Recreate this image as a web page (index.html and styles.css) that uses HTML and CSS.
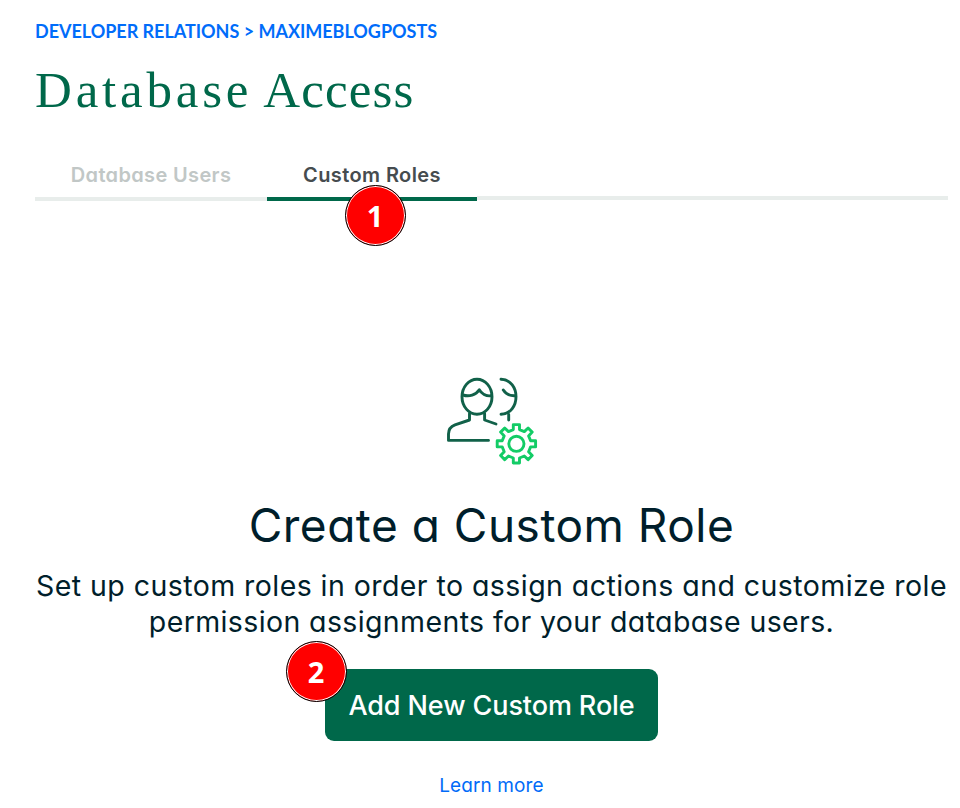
FILE: index.html
```html
<!DOCTYPE html>
<html lang="en">
<head>
<meta charset="utf-8">
<title>Database Access</title>
<link rel="stylesheet" href="styles.css">
</head>
<body>
<main class="page">
  <nav class="breadcrumb">DEVELOPER RELATIONS &gt; MAXIMEBLOGPOSTS</nav>
  <h1 class="title"><span class="wide">Database</span> Access</h1>
  <div class="tabs">
    <a class="tab tab-users"><span>Database Users</span></a>
    <a class="tab tab-roles"><span>Custom Roles</span><b class="marker marker-one">1</b></a>
    <div class="rule"></div>
  </div>
  <section class="empty">
    <svg class="icon" width="110" height="100" viewBox="0 0 110 100" fill="none" stroke-width="2.9" stroke-linecap="round" stroke-linejoin="round">
      <g stroke="#116149">
        <ellipse cx="41" cy="26.8" rx="15" ry="17.5"/>
        <path d="M27 25C33 27 40 25 43.3 19.8C45.5 23.5 50 26.5 55 25.8"/>
        <path d="M33.5 43.5V50L19 54.8C14.5 56.5 12.5 60 12.5 64V70.4H52.5M48.6 43.5V50L60 54"/>
        <path d="M65 9.3C85 10 85 43.5 65 44.3M67.3 20C69.5 23.5 73.5 25.8 78.5 25.7M72.7 44.5V50"/>
      </g>
      <g stroke="#13cc66" transform="translate(80.4 73.8)">
        <circle r="7.6"/>
        <path d="M-3.1-19.2H3.1V-14.2L7.9-12.2 11.7-15.8 15.8-11.7 12.2-7.9 14.2-3.1H19.2V3.1H14.2L12.2 7.9 15.8 11.7 11.7 15.8 7.9 12.2 3.1 14.2V19.2H-3.1V14.2L-7.9 12.2-11.7 15.8-15.8 11.7-12.2 7.9-14.2 3.1H-19.2V-3.1H-14.2L-12.2-7.9-15.8-11.7-11.7-15.8-7.9-12.2-3.1-14.2Z"/>
      </g>
    </svg>
    <h2 class="heading">Create a Custom Role</h2>
    <p class="copy"><span class="line-one">Set up custom roles in order to assign actions and customize role</span><br><span class="line-two">permission assignments for your database users.</span></p>
    <button class="add"><span>Add New Custom Role</span><b class="marker marker-two">2</b></button>
    <a class="learn">Learn more</a>
  </section>
</main>
</body>
</html>
```
FILE: styles.css
```css
* { box-sizing: border-box; }
body { margin: 0; background: #fff; font-family: Inter, sans-serif; font-feature-settings: "cv11" 1; }
.page { width: 960px; height: 808px; padding: 19px 12px 0 35px; overflow: hidden; white-space: nowrap; }
.breadcrumb { height: 25px; line-height: 25px; color: #006cfa; font-family: Lato, sans-serif; font-size: 18px; font-weight: 700; letter-spacing: -.02px; }
.title { margin: 16px 0 0; height: 60px; color: #00684a; font: 400 51px/60px "Liberation Serif", serif; letter-spacing: 1.1px; }
.wide { letter-spacing: 3.8px; }
.tabs { display: flex; height: 41px; margin-top: 40px; }
.tab { position: relative; height: 41px; padding-top: 1px; border-bottom: 4px solid #e8edeb; text-align: center; font-size: 20px; line-height: 28px; font-weight: 600; }
.tab-users { width: 232px; color: #c1c7c6; letter-spacing: .35px; }
.tab-roles { width: 210px; color: #464c4f; border-color: #00684a; letter-spacing: .4px; }
.rule { flex: 1; height: 40px; border-bottom: 4px solid #e8edeb; }
.marker { position: absolute; width: 61px; height: 61px; border: 1px solid #000; border-radius: 50%; background: #f00; box-shadow: inset 0 0 0 1px #fff; color: #fff; font: 700 29px/60px "Open Sans", sans-serif; letter-spacing: 0; text-align: center; }
.marker-one { left: 77.5px; top: 24.5px; }
.marker-two { left: -39.5px; top: -28.5px; }
.empty { display: flex; flex-direction: column; align-items: center; width: 913px; padding-top: 169px; }
.icon { flex: none; display: block; margin-right: 2px; }
.heading { margin: 25px 0 0; height: 60px; color: #001e2b; font-weight: 400; font-size: 46px; line-height: 60px; letter-spacing: .5px; }
.copy { margin: 13px 0 0; height: 72px; color: #001e2b; font-size: 28.5px; line-height: 36px; text-align: center; }
.line-one { letter-spacing: .44px; }
.line-two { letter-spacing: .38px; }
.add { position: relative; width: 333px; height: 72px; margin-top: 29px; padding: 2px 0 0; border: 0; border-radius: 9px; background: #00684a; color: #fff; font: 500 27px/70px Inter, sans-serif; letter-spacing: -.1px; }
.learn { margin-top: 33px; color: #016bf8; font-size: 19px; line-height: 24px; letter-spacing: .1px; }
```
